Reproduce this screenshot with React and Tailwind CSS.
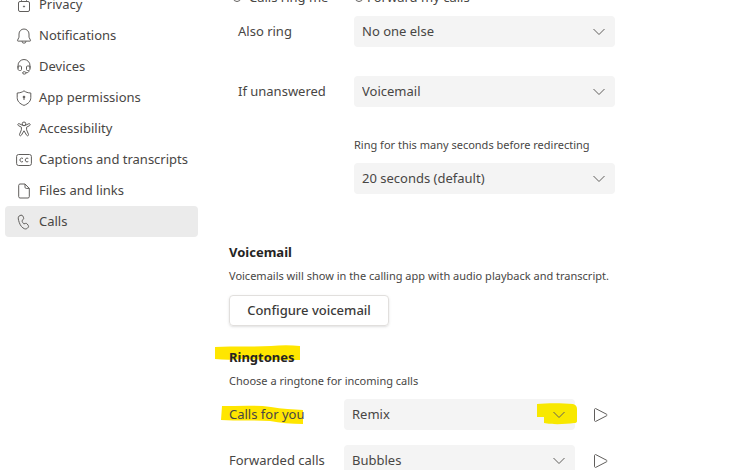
import React, { useState } from "react";

const PrivacyIcon = () => (
  <>
    <rect x="2.5" y="4.5" width="11" height="10" rx="1.5" />
    <path d="M5.5 4.500V3.500a2.5 2.5 0 0 1 5 0v1" />
    <circle cx="8" cy="9.500" r="0.6" fill="currentColor" />
  </>
);

const BellIcon = () => (
  <>
    <path d="M8 1a5 5 0 0 0-5 5v3.200L1.500 12.300c-.2.4 0 .8.5.8h12c.5 0 .7-.4.5-.8L13 9.200V6a5 5 0 0 0-5-5Z" />
    <path d="M6 13.200a2 2 0 0 0 4 0" />
  </>
);

const HeadsetIcon = () => (
  <>
    <path d="M2 9.500V6.500a6 6 0 0 1 12 0v3" />
    <path d="M2 7h2.500c.6 0 1 .4 1 1v2.500c0 .6-.4 1-1 1h-1C2.700 11.500 2 10.800 2 10ZM14 7h-2.500c-.6 0-1 .4-1 1v2.500c0 .6.4 1 1 1h1c.8 0 1.500-.7 1.500-1.500Z" />
    <path d="M13 11.500c0 1.500-1 2.300-3 2.300" />
    <ellipse cx="8.300" cy="13.900" rx="1.700" ry="1.200" />
  </>
);

const ShieldIcon = () => (
  <>
    <path d="M8 .8c1.800 1.400 3.800 2.100 6.800 2.200V7.500c0 3.600-2.300 6.200-6.800 7.900-4.500-1.700-6.800-4.300-6.800-7.900V3C4.200 2.900 6.200 2.200 8 .8Z" />
    <circle cx="8" cy="7" r="0.900" fill="currentColor" />
    <path d="M8 7.500v2.500" />
  </>
);

const AccessibilityIcon = () => (
  <>
    <circle cx="8" cy="2.800" r="1.800" />
    <path d="M6.300 4.200 3.200 2.700c-1.300-.5-2 1.300-.8 1.900L5.400 6.200v2.600l-1.900 4.600c-.5 1.300 1.300 2 1.900.8L8 9.800l2.600 4.400c.6 1.200 2.400.5 1.900-.8l-1.900-4.600V6.200l3-1.600c1.200-.6.5-2.400-.8-1.900L9.700 4.200c-1 .6-2.400.6-3.400 0Z" />
  </>
);

const CaptionsIcon = () => (
  <>
    <rect x="0.600" y="2.500" width="14.800" height="11" rx="2" />
    <path d="M7 6.500a1.900 1.900 0 1 0 0 3M12.300 6.500a1.900 1.900 0 1 0 0 3" />
  </>
);

const FileIcon = () => (
  <path d="M9 1H4c-.8 0-1.300.6-1.300 1.300v11.400c0 .8.5 1.300 1.300 1.300h8c.8 0 1.300-.5 1.300-1.300V5.400L9 1v3.200c0 .7.500 1.200 1.200 1.200h3.100" />
);

const PhoneIcon = () => (
  <path d="m4 1.500 1-.3c.8-.2 1.500.1 1.800.8l.8 1.800c.2.600.1 1.200-.4 1.700L6 6.600c0 .9 1 2.700 1.900 3.300l1.600-.5c.6-.2 1.200 0 1.600.5l1.200 1.600c.4.600.4 1.300-.1 1.900l-.7.700c-.8.800-1.900 1-2.900.7-2.400-.9-4.200-3.100-5.300-6.200S2 3.900 2.500 2.900c.3-.7.900-1.200 1.500-1.400Z" />
);

const navItems = [
  { name: "Privacy", icon: PrivacyIcon },
  { name: "Notifications", icon: BellIcon },
  { name: "Devices", icon: HeadsetIcon },
  { name: "App permissions", icon: ShieldIcon },
  { name: "Accessibility", icon: AccessibilityIcon },
  { name: "Captions and transcripts", icon: CaptionsIcon },
  { name: "Files and links", icon: FileIcon },
  { name: "Calls", icon: PhoneIcon },
];

function Select({ id, options, marked }) {
  return (
    <div className="relative min-w-0 flex-1">
      <select
        id={id}
        className="block h-[31px] w-full appearance-none rounded bg-[#f4f4f4] px-2 text-[13px] text-[#484644]"
      >
        {options.map((option) => (
          <option key={option}>{option}</option>
        ))}
      </select>
      {marked && (
        <svg
          className="pointer-events-none absolute top-1 -right-0.5 h-6 w-10"
          viewBox="0 0 40 24"
          fill="#f8e800"
        >
          <path d="M0 1C10 0 25 0 36 1q4 1 4 5v12q0 2-3 2c-8 1-20 2-30 0v-6H0Z" />
        </svg>
      )}
      <svg
        className="pointer-events-none absolute top-2 right-2 h-4 w-4"
        viewBox="0 0 16 16"
        fill="none"
        stroke="#605e5c"
      >
        <path d="m2.500 5 5.500 5.500L13.500 5" />
      </svg>
    </div>
  );
}

function PlayButton({ label }) {
  return (
    <button type="button" aria-label={label} className="w-10 pl-[18px]">
      <svg className="h-4 w-4" viewBox="0 0 16 16" fill="none" stroke="#605e5c">
        <path d="M1.500 2.500v11c0 .8.800 1.200 1.400.8l10.600-5.500c.7-.4.7-1.200 0-1.600L2.900 1.700c-.6-.4-1.400 0-1.400.8Z" />
      </svg>
    </button>
  );
}

function App() {
  const [active, setActive] = useState("Calls");
  const [mode, setMode] = useState("ring");

  return (
    <div className="flex h-screen overflow-hidden bg-white font-['Noto_Sans','Open_Sans',sans-serif] text-[13px] text-[#484644]">
      <nav className="-mt-[11px] ml-[5px] w-[193px] shrink-0">
        {navItems.map(({ name, icon: Icon }) => (
          <button
            key={name}
            type="button"
            onClick={() => setActive(name)}
            className={`flex h-[31px] w-full items-center gap-[7px] rounded pl-[11px] whitespace-nowrap ${
              active === name ? "bg-[#ebebeb]" : ""
            }`}
          >
            <svg
              className="h-4 w-4 shrink-0"
              viewBox="0 0 16 16"
              fill="none"
              stroke="#605e5c"
              strokeLinejoin="round"
            >
              <Icon />
            </svg>
            {name}
          </button>
        ))}
      </nav>

      <main className="-mt-3.5 ml-[31px] min-w-0 flex-1 pr-[125px]">
        {/* Call answering */}
        <div className="flex h-6 items-center">
          <label className="flex w-[122px] items-center gap-2 pl-1">
            <input
              type="radio"
              name="mode"
              checked={mode === "ring"}
              onChange={() => setMode("ring")}
              className="h-2 w-2 appearance-none rounded-full border border-[#605e5c]"
            />
            Calls ring me
          </label>
          <label className="flex items-center gap-1 pl-1">
            <input
              type="radio"
              name="mode"
              checked={mode === "forward"}
              onChange={() => setMode("forward")}
              className="h-2 w-2 appearance-none rounded-full border border-[#605e5c]"
            />
            Forward my calls
          </label>
        </div>
        <div className="mt-1.5 flex items-center">
          <label htmlFor="also-ring" className="w-[125px] pl-[9px]">Also ring</label>
          <Select id="also-ring" options={["No one else", "Someone else"]} />
        </div>
        <div className="mt-[29px] flex items-center">
          <label htmlFor="unanswered" className="w-[125px] pl-[9px]">If unanswered</label>
          <Select id="unanswered" options={["Voicemail", "Do nothing"]} />
        </div>
        <div className="mt-7 flex flex-col gap-2 pl-[125px]">
          <label htmlFor="delay" className="text-[11px] leading-5 whitespace-nowrap">
            Ring for this many seconds before redirecting
          </label>
          <div className="flex">
            <Select id="delay" options={["20 seconds (default)", "30 seconds"]} />
          </div>
        </div>

        {/* Voicemail */}
        <h2 className="mt-[46px] text-[13px] leading-6 font-bold text-[#252423]">Voicemail</h2>
        <p className="text-[11px] leading-6 whitespace-nowrap">
          Voicemails will show in the calling app with audio playback and transcript.
        </p>
        <button
          type="button"
          className="mt-[7px] h-[31px] w-40 rounded border border-[#e1dfdd] text-[13px] font-medium whitespace-nowrap text-[#3b3a39] shadow-sm"
        >
          Configure voicemail
        </button>

        {/* Ringtones */}
        <h2 className="relative isolate mt-[19px] text-[13px] leading-6 font-bold text-[#252423]">
          <svg
            className="absolute top-0 -left-3.5 -z-10 h-4 w-[86px]"
            viewBox="0 0 86 16"
            fill="#ffe600"
          >
            <path d="M0 2c20-1 40 0 56-1 10-1 20-1 29 0v14c-20 0-40 0-58-1-9 1-18 1-27 0Z" />
          </svg>
          Ringtones
        </h2>
        <p className="text-[11px] leading-6">Choose a ringtone for incoming calls</p>
        <div className="mt-[6px] flex items-center">
          <label htmlFor="calls-for-you" className="relative isolate w-[115px] whitespace-nowrap">
            <svg
              className="absolute top-0 -left-2 -z-10 h-5 w-[83px]"
              viewBox="0 0 83 20"
              fill="#ffe600"
            >
              <path d="M1 1c17 0 34-1 49 1 11 2 22 2 32 3v14c-12 0-23-1-33-3-16-1-33 0-49-1Z" />
            </svg>
            Calls for you
          </label>
          <Select id="calls-for-you" options={["Remix", "Default", "Bubbles"]} marked />
          <PlayButton label="Play ringtone for your calls" />
        </div>
        <div className="mt-[15px] flex items-center">
          <label htmlFor="forwarded" className="w-[115px] whitespace-nowrap">Forwarded calls</label>
          <Select id="forwarded" options={["Bubbles", "Default", "Remix"]} />
          <PlayButton label="Play ringtone for forwarded calls" />
        </div>
      </main>
    </div>
  );
}

export default App;
